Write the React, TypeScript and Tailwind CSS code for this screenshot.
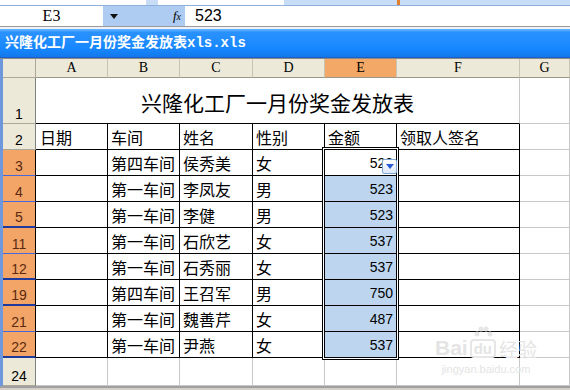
import React from "react";

const cjk = "font-['Noto_Sans_CJK_SC',sans-serif]";
const num = "font-['Liberation_Sans',sans-serif]";
const serif = "font-['Liberation_Serif',serif]";

type Row = { n: string; b: string; c: string; d: string; e: string; thick: boolean };

const rows: Row[] = [
  { n: "3", b: "第四车间", c: "侯秀美", d: "女", e: "523", thick: false },
  { n: "4", b: "第一车间", c: "李凤友", d: "男", e: "523", thick: false },
  { n: "5", b: "第一车间", c: "李健", d: "男", e: "523", thick: true },
  { n: "11", b: "第一车间", c: "石欣艺", d: "女", e: "537", thick: false },
  { n: "12", b: "第一车间", c: "石秀丽", d: "女", e: "537", thick: true },
  { n: "19", b: "第四车间", c: "王召军", d: "男", e: "750", thick: true },
  { n: "21", b: "第一车间", c: "魏善芹", d: "女", e: "487", thick: false },
  { n: "22", b: "第一车间", c: "尹燕", d: "女", e: "537", thick: true },
];

const cols = ["A", "B", "C", "D", "E", "F", "G"];

const black = "border-r border-b border-black";
const gray = "border-r border-b border-[#c8c8c8]";

const FormulaBar = () => (
  <div>
    <div className="flex h-[5px] bg-[#c9dcf5]">
      <div className="w-[146px] bg-white" />
      <div className="w-[12px]" />
      <div className="w-[126px] bg-white" />
      <div className="ml-[113px] w-[3px] bg-[#e0802e]" />
    </div>
    <div className="h-px bg-[#8fb0dc]" />
    <div className="flex h-[20px]">
      <div className={`flex w-[103px] items-center justify-center bg-white text-[16px] text-black ${serif}`}>E3</div>
      <div className="flex w-[82px] items-center bg-[#aecbf1]">
        <svg width="8" height="5" viewBox="0 0 8 5" className="ml-[7px]">
          <path d="M0 0h8L4 5z" fill="#111" />
        </svg>
        <span className={`ml-auto mr-[4px] text-[13px] italic text-black ${serif}`}>
          f<span className="text-[10px]">x</span>
        </span>
      </div>
      <div className={`flex flex-1 items-center bg-white pl-[10px] text-[16px] text-black ${num}`}>523</div>
    </div>
    <div className="h-px bg-[#9a9a9a]" />
    <div className="h-[2px] bg-[#eef2f8]" />
    <div className="flex h-[28px] items-center bg-[linear-gradient(to_bottom,#6ab6ff_0%,#2a92ff_12%,#1787ff_70%,#1278ea_100%)] pl-[5px]">
      <span className="font-['Liberation_Mono','Noto_Sans_CJK_SC',monospace] text-[14px] font-bold text-white">
        兴隆化工厂一月份奖金发放表xls.xls
      </span>
    </div>
    <div className="h-px bg-[#1d5fc4]" />
    <div className="h-px bg-[#8a8a8a]" />
  </div>
);

const RowHead = ({ n, kind, thick }: { n: string; kind: "plain" | "sel"; thick?: boolean }) => (
  <div
    className={
      `flex items-end justify-center pb-[2px] text-[14px] leading-none ${num} ` +
      (kind === "sel"
        ? thick
          ? "border-r border-r-black border-b-2 border-b-[#1e3a9c] bg-[#f2a567] text-[#5b2a10]"
          : "border-r border-r-black border-b border-b-[#4668d8] bg-[#f2a567] text-[#5b2a10]"
        : "border-r border-r-[#808080] border-b border-b-[#aca899] bg-[#ece9d8] text-black")
    }
  >
    {n}
  </div>
);

const Txt = ({ children, cls }: { children?: React.ReactNode; cls: string }) => (
  <div className={`flex items-center overflow-hidden whitespace-nowrap pl-[3px] text-[16px] leading-none text-black ${cjk} ${cls}`}>
    {children}
  </div>
);

const Sheet = () => (
  <div className="relative flex">
    <div className="w-[3px] bg-[#6f97dc]" />
    <div className="grid flex-1 grid-cols-[33px_72px_72px_73px_72px_72px_123px_1fr] grid-rows-[19px_46px_repeat(9,26px)_28px]">
      {/* header row */}
      <div className="border-r border-b border-[#aca899] bg-[#ece9d8]" />
      {cols.map((c) => (
        <div
          key={c}
          className={`flex items-center justify-center border-r border-b border-r-[#c9c5b4] border-b-[#9a9688] text-[14px] leading-none text-black ${serif} ${
            c === "E" ? "bg-[#f4a867]" : "bg-[#ece9d8]"
          }`}
        >
          {c}
        </div>
      ))}

      {/* row 1 */}
      <RowHead n="1" kind="plain" />
      <div className={`col-span-6 flex items-center justify-center border-r border-b border-r-[#c8c8c8] border-b-black pt-[3px] text-[21px] leading-none text-black ${cjk}`}>
        兴隆化工厂一月份奖金发放表
      </div>
      <div className={gray} />

      {/* row 2 */}
      <RowHead n="2" kind="plain" />
      <Txt cls={`${black} pl-[4px]`}>日期</Txt>
      <Txt cls={black}>车间</Txt>
      <Txt cls={black}>姓名</Txt>
      <Txt cls={black}>性别</Txt>
      <Txt cls={black}>金额</Txt>
      <Txt cls={black}>领取人签名</Txt>
      <div className={gray} />

      {rows.map((r, i) => (
        <React.Fragment key={r.n}>
          <RowHead n={r.n} kind="sel" thick={r.thick} />
          <Txt cls={black} />
          <Txt cls={black}>{r.b}</Txt>
          <Txt cls={black}>{r.c}</Txt>
          <Txt cls={black}>{r.d}</Txt>
          <div
            className={`flex items-center justify-end pr-[3px] text-[14px] leading-none text-black ${num} ${black} ${
              i === 0 ? "bg-white" : "bg-[#bdd5ef]"
            }`}
          >
            {r.e}
          </div>
          <Txt cls={black} />
          <div className={gray} />
        </React.Fragment>
      ))}

      {/* row 24 */}
      <RowHead n="24" kind="plain" />
      {cols.map((c) => (
        <div key={c} className={gray} />
      ))}
    </div>

    {/* selection frame E3:E22 */}
    <div className="absolute left-[322px] top-[88px] h-[213px] w-[77px] border border-black shadow-[inset_0_0_0_1px_#ffffff]" />

    {/* autocomplete button in E3 */}
    <div className="absolute left-[382px] top-[100px] flex h-[15px] w-[15px] items-center justify-center rounded-[2px] border border-[#7fa6d6] bg-[linear-gradient(to_bottom,#ffffff,#dce8f7)]">
      <svg width="8" height="5" viewBox="0 0 8 5">
        <path d="M0 0h8L4 5z" fill="#2a5bd7" />
      </svg>
    </div>

    {/* watermark */}
    <div className="pointer-events-none absolute left-[435px] top-[266px] flex flex-col items-center text-[#e4e4e4]">
      <div className="flex items-end">
        <span className="font-['Liberation_Sans',sans-serif] text-[21px] font-bold leading-none">Bai</span>
        <span className="ml-[2px] flex flex-col items-center">
          <svg width="22" height="14" viewBox="0 0 22 14">
            <circle cx="5" cy="9" r="2.5" fill="#e6e6e6" />
            <circle cx="9" cy="4" r="2.5" fill="#e6e6e6" />
            <circle cx="14" cy="4" r="2.5" fill="#e6e6e6" />
            <circle cx="18" cy="9" r="2.5" fill="#e6e6e6" />
          </svg>
          <span className="rounded-[4px] border-2 border-[#e6e6e6] px-[2px] font-['Liberation_Sans',sans-serif] text-[15px] font-bold leading-none">du</span>
        </span>
        <span className={`ml-[3px] text-[19px] leading-none ${cjk}`}>经验</span>
      </div>
      <span className="mt-[6px] font-['Liberation_Sans',sans-serif] text-[11px] leading-none">jingyan.baidu.com</span>
    </div>
  </div>
);

export default function App() {
  return (
    <div className="h-[390px] w-[570px] overflow-hidden bg-white">
      <FormulaBar />
      <Sheet />
      <div className="h-[2px] bg-[#a0a0a0]" />
      <div className="h-[4px] bg-[#d4d0c8]" />
    </div>
  );
}
